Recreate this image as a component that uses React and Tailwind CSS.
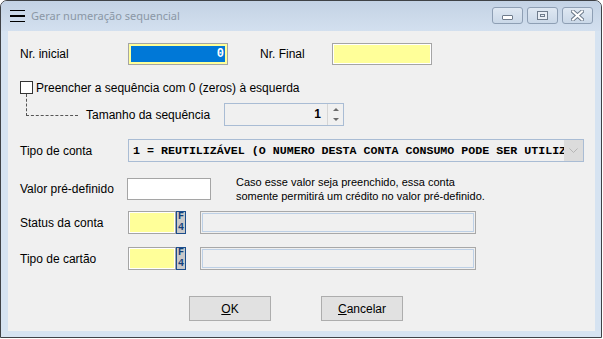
const sans = { fontFamily: '"Liberation Sans", Arial, sans-serif' }

function F4Button() {
  return (
    <div className="w-[10px] h-[23px] border border-[#1b4d8c] bg-[#c9c9c9] flex flex-col items-center justify-center gap-[1px] text-[10px] font-bold text-[#123f7c] font-['Liberation_Mono',monospace]">
      <span className="block h-[10px] leading-[10px]">F</span>
      <span className="block h-[10px] leading-[10px]">4</span>
    </div>
  )
}

function LookupRow({ label }) {
  return (
    <div className="flex items-center h-[23px]">
      <div className="w-[108px]">{label}</div>
      <div className="w-[48px] h-[23px] border border-[#a5a5a5] bg-white p-px">
        <div className="w-full h-full bg-[#ffff99]" />
      </div>
      <F4Button />
      <div className="ml-[14px] w-[276px] h-[23px] border border-[#a8a8a8] p-px">
        <div className="w-full h-full border border-[#bdd0e6] bg-[#f0f0f0]" />
      </div>
    </div>
  )
}

function TitleButton({ children }) {
  return (
    <div className="w-[31px] h-[17px] rounded-[3px] border border-[#8e9fb4] bg-gradient-to-b from-[#dfe8f2] to-[#cad8e8] flex items-center justify-center">
      {children}
    </div>
  )
}

export default function App() {
  return (
    <div className="w-[603px] h-[339px] bg-white">
      <div
        className="w-[602px] h-[338px] border border-[#3f4246] rounded-t-[7px] bg-[#d6e3f1] flex flex-col overflow-hidden"
        style={sans}
      >
        {/* barra de título */}
        <div className="h-[30px] flex items-center bg-gradient-to-b from-[#c3d2e4] to-[#d3e0ef]">
          <div className="ml-[9px] w-[15px] flex flex-col gap-[4px]">
            <div className="h-[1.5px] bg-black" />
            <div className="h-[1.5px] bg-black" />
            <div className="h-[1.5px] bg-black" />
          </div>
          <span className="ml-[6px] text-[11px] text-[#8a97a5]" style={{ fontFamily: '"Noto Sans", "Open Sans", sans-serif' }}>
            Gerar numeração sequencial
          </span>
          <div className="ml-auto mr-[8px] mt-[-2px] flex gap-[4px]">
            <TitleButton>
              <div className="w-[11px] h-[5px] mt-[5px] bg-white border border-[#6f7c8c] rounded-[1px]" />
            </TitleButton>
            <TitleButton>
              <div className="w-[11px] h-[9px] border border-[#6f7c8c] bg-[#e8eef5] flex items-center justify-center">
                <div className="w-[5px] h-[3px] border border-[#6f7c8c]" />
              </div>
            </TitleButton>
            <TitleButton>
              <svg width="13" height="11" viewBox="0 0 13 11">
                <path d="M2 1.5 L11 9.5 M11 1.5 L2 9.5" stroke="#6f7c8c" strokeWidth="4" strokeLinecap="square" />
                <path d="M2 1.5 L11 9.5 M11 1.5 L2 9.5" stroke="#ffffff" strokeWidth="2" strokeLinecap="square" />
              </svg>
            </TitleButton>
          </div>
        </div>

        {/* conteúdo */}
        <div className="flex pl-[7px] pr-[6px]">
          <div className="w-[587px] h-[300px] bg-[#f0f0f0] pl-[12px] text-[12px] text-black flex flex-col">
            <div className="mt-[12px] flex items-center h-[22px]">
              <div className="w-[108px]">Nr. inicial</div>
              <div className="w-[100px] h-[22px] border border-[#a5a5a5] bg-[#ffff99] p-[2px]">
                <div className="w-full h-full bg-[#0078d7] text-white text-right pr-[1px] leading-[16px] font-['Liberation_Mono',monospace] text-[12px] font-bold">
                  0
                </div>
              </div>
              <div className="ml-[32px] w-[72px]">Nr. Final</div>
              <div className="w-[100px] h-[22px] border border-[#a5a5a5] bg-white p-px">
                <div className="w-full h-full bg-[#ffff99]" />
              </div>
            </div>

            <div className="mt-[16px] flex items-center h-[13px]">
              <div className="w-[13px] h-[13px] border border-[#333333] bg-white" />
              <span className="ml-[3px]">Preencher a sequência com 0 (zeros) à esquerda</span>
            </div>

            <div className="mt-[9px] flex items-start h-[23px]">
              <div className="ml-[6px] -mt-[9px] w-[52px] h-[22px] border-l border-b border-dashed border-[#555555]" />
              <div className="ml-[8px] w-[138px] h-[23px] flex items-center">Tamanho da sequência</div>
              <div className="w-[120px] h-[23px] border border-[#a9bcd4] bg-[#f0f0f0] flex">
                <div className="flex-1 text-right pr-[6px] leading-[21px] font-bold">1</div>
                <div className="w-[16px] border-l border-[#d6d6d6] flex flex-col">
                  <div className="flex-1 flex items-center justify-center">
                    <div className="w-0 h-0 border-l-[3px] border-r-[3px] border-b-[3px] border-l-transparent border-r-transparent border-b-[#6b6b6b]" />
                  </div>
                  <div className="flex-1 flex items-center justify-center">
                    <div className="w-0 h-0 border-l-[3px] border-r-[3px] border-t-[3px] border-l-transparent border-r-transparent border-t-[#6b6b6b]" />
                  </div>
                </div>
              </div>
            </div>

            <div className="mt-[13px] flex items-center h-[23px]">
              <div className="w-[108px]">Tipo de conta</div>
              <div className="w-[456px] h-[23px] border border-[#a9bcd4] bg-[#f0f0f0] flex">
                <div className="flex-1 overflow-hidden whitespace-nowrap pl-[4px] leading-[21px] font-['Liberation_Mono',monospace] text-[11.65px] font-bold">
                  1 = REUTILIZÁVEL (O NUMERO DESTA CONTA CONSUMO PODE SER UTILIZADO VÁRIAS VEZES)
                </div>
                <div className="w-[19px] bg-[#dcdcdc] flex items-center justify-center">
                  <svg width="9" height="6" viewBox="0 0 9 6">
                    <path d="M0.5 0.5 L4.5 4.5 L8.5 0.5" fill="none" stroke="#b5b5b5" strokeWidth="1" />
                  </svg>
                </div>
              </div>
            </div>

            <div className="mt-[16px] flex items-center h-[22px]">
              <div className="w-[107px]">Valor pré-definido</div>
              <div className="w-[84px] h-[22px] border border-[#a5a5a5] bg-white" />
              <div className="ml-[25px] text-[11px] leading-[14px]">
                <div>Caso esse valor seja preenchido, essa conta</div>
                <div>somente permitirá um crédito no valor pré-definido.</div>
              </div>
            </div>

            <div className="mt-[11px]">
              <LookupRow label="Status da conta" />
            </div>
            <div className="mt-[13px]">
              <LookupRow label="Tipo de cartão" />
            </div>

            <div className="mt-[26px] ml-[169px] flex gap-[50px]">
              <button className="w-[82px] h-[25px] border border-[#adadad] bg-[#e1e1e1] text-[12px]">
                <span className="underline">O</span>K
              </button>
              <button className="w-[82px] h-[25px] border border-[#adadad] bg-[#e1e1e1] text-[12px]">
                <span className="underline">C</span>ancelar
              </button>
            </div>
          </div>
        </div>
      </div>
    </div>
  )
}
